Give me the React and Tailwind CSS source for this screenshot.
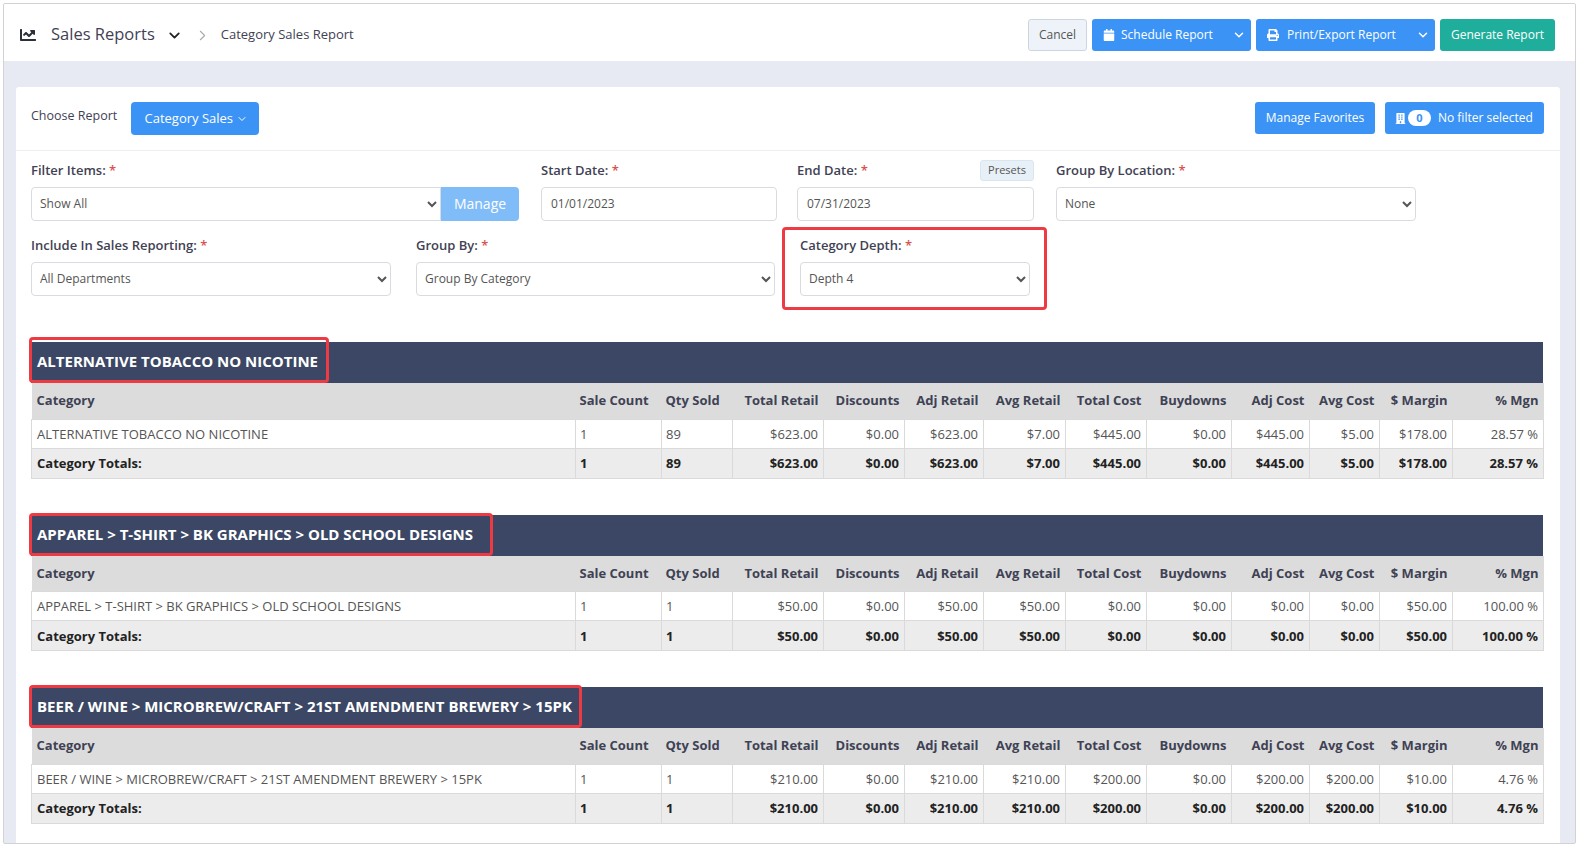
import { ChevronDown, ChevronRight } from 'lucide-react'
import { FaChartLine, FaCalendar, FaPrint, FaBuilding } from 'react-icons/fa'

const columns = [
    { name: 'Category', width: 'w-[544px]', align: 'text-left', pad: 'px-[5px]' },
    { name: 'Sale Count', width: 'w-[86px]', align: 'text-left', pad: 'px-[4px]' },
    { name: 'Qty Sold', width: 'w-[71px]', align: 'text-left', pad: 'px-[4px]' },
    { name: 'Total Retail', width: 'w-[91px]', align: 'text-right', pad: 'px-[5px]' },
    { name: 'Discounts', width: 'w-[81px]', align: 'text-right', pad: 'px-[5px]' },
    { name: 'Adj Retail', width: 'w-[79px]', align: 'text-right', pad: 'px-[5px]' },
    { name: 'Avg Retail', width: 'w-[82px]', align: 'text-right', pad: 'px-[5px]' },
    { name: 'Total Cost', width: 'w-[81px]', align: 'text-right', pad: 'px-[5px]' },
    { name: 'Buydowns', width: 'w-[85px]', align: 'text-right', pad: 'px-[5px]' },
    { name: 'Adj Cost', width: 'w-[78px]', align: 'text-right', pad: 'px-[5px]' },
    { name: 'Avg Cost', width: 'w-[70px]', align: 'text-right', pad: 'px-[5px]' },
    { name: '$ Margin', width: 'w-[73px]', align: 'text-right', pad: 'px-[5px]' },
    { name: '% Mgn', width: 'w-[91px]', align: 'text-right', pad: 'px-[5px]' },
]

const reports = [
    {
        title: 'ALTERNATIVE TOBACCO NO NICOTINE',
        box: '-top-[5px] -right-[11px]',
        values: ['1', '89', '$623.00', '$0.00', '$623.00', '$7.00', '$445.00', '$0.00', '$445.00', '$5.00', '$178.00', '28.57 %'],
    },
    {
        title: 'APPAREL > T-SHIRT > BK GRAPHICS > OLD SCHOOL DESIGNS',
        box: '-top-[2px] -right-[20px]',
        values: ['1', '1', '$50.00', '$0.00', '$50.00', '$50.00', '$0.00', '$0.00', '$0.00', '$0.00', '$50.00', '100.00 %'],
    },
    {
        title: 'BEER / WINE > MICROBREW/CRAFT > 21ST AMENDMENT BREWERY > 15PK',
        box: '-top-[2px] -right-[10px]',
        values: ['1', '1', '$210.00', '$0.00', '$210.00', '$210.00', '$200.00', '$0.00', '$200.00', '$200.00', '$10.00', '4.76 %'],
    },
]

function Label({ text }) {
    return (
        <div className="h-5 text-[13px] leading-5 font-semibold text-[#3f4254]">
            {text} <span className="text-[#d9534f]">*</span>
        </div>
    )
}

function Select({ value }) {
    return (
        <select defaultValue={value} className="mt-[7px] block h-[34px] w-full rounded-[4px] border border-[#d8dbe0] bg-white pb-[2px] pl-[4px] text-[12px] text-[#555]">
            <option>{value}</option>
        </select>
    )
}

function DateInput({ value }) {
    return (
        <input defaultValue={value} className="mt-[7px] block h-[34px] w-full rounded-[4px] border border-[#d8dbe0] bg-white px-[9px] pb-[2px] text-[12px] text-[#555]" />
    )
}

function ReportTable({ report }) {
    return (
        <div className="mb-9 w-[1512px]">
            <div className="flex h-[41px] bg-[#3b4764]">
                <div className="relative ml-[6px] flex items-center pb-[2px] text-[15px] font-bold text-white">
                    {report.title}
                    <div className={`absolute -left-[8px] bottom-0 rounded-[4px] border-[3px] border-[#ee3b43] ${report.box}`}></div>
                </div>
            </div>
            <table className="w-[1512px] table-fixed border-collapse text-[13px]">
                <thead>
                    <tr className="h-9 bg-[#dcdcdc] text-[#3f4254]">
                        {columns.map(col => (
                            <th key={col.name} className={`${col.width} ${col.align} ${col.pad} font-bold whitespace-nowrap`}>{col.name}</th>
                        ))}
                    </tr>
                </thead>
                <tbody>
                    <tr className="h-[29px] bg-white text-[#555]">
                        <td className="border border-[#dadada] px-[5px] pt-[2px] whitespace-nowrap">{report.title}</td>
                        {report.values.map((v, i) => (
                            <td key={i} className={`${columns[i + 1].align} ${columns[i + 1].pad} border border-[#dadada] pt-[2px] whitespace-nowrap`}>{v}</td>
                        ))}
                    </tr>
                    <tr className="h-[30px] bg-[#ececec] font-bold text-[#222]">
                        <td className="border border-[#dadada] px-[5px] pt-[2px]">Category Totals:</td>
                        {report.values.map((v, i) => (
                            <td key={i} className={`${columns[i + 1].align} ${columns[i + 1].pad} border border-[#dadada] pt-[2px] whitespace-nowrap`}>{v}</td>
                        ))}
                    </tr>
                </tbody>
            </table>
        </div>
    )
}

export default function App() {
    return (
        <div className="h-[847px] overflow-hidden bg-white pt-[3px] pr-[4px] pb-[3px] pl-[3px] font-['Open_Sans',sans-serif]">
            <div className="h-[841px] overflow-hidden rounded-[2px] border border-[#d2d2d2] bg-[#e8eaf3]">
                <div className="flex h-[57px] items-center justify-between bg-white pt-[5px] pr-[20px] pl-[16px]">
                    <div className="flex items-center text-[#3f4254]">
                        <FaChartLine className="text-[16px] text-[#2b2f3a]" />
                        <span className="mb-[1px] ml-[15px] text-[16.5px]">Sales Reports</span>
                        <ChevronDown className="ml-[11px] size-[17px] text-[#222]" strokeWidth={2.5} />
                        <ChevronRight className="ml-[11px] size-[17px] text-[#aaa]" strokeWidth={1.5} />
                        <span className="ml-[10px] text-[13px]">Category Sales Report</span>
                    </div>
                    <div className="flex h-8 items-stretch gap-[5px] text-[12px] text-white">
                        <button className="w-[59px] rounded-[3px] border border-[#cdd6e0] bg-[#eef3f9] text-[#555]">Cancel</button>
                        <button className="flex w-[159px] items-center rounded-[3px] bg-[#3b93f5] pr-[5px] pl-[11px]">
                            <FaCalendar className="text-[12px]" />
                            <span className="ml-[6px]">Schedule Report</span>
                            <ChevronDown className="ml-auto size-[14px]" strokeWidth={2.5} />
                        </button>
                        <button className="flex w-[179px] items-center rounded-[3px] bg-[#3b93f5] pr-[5px] pl-[11px]">
                            <FaPrint className="text-[12px]" />
                            <span className="ml-[8px]">Print/Export Report</span>
                            <ChevronDown className="ml-auto size-[14px]" strokeWidth={2.5} />
                        </button>
                        <button className="w-[115px] rounded-[3px] bg-[#1fae9b]">Generate Report</button>
                    </div>
                </div>

                <div className="mt-[26px] mr-[15px] ml-[12px] h-[800px] rounded-t-[3px] bg-white px-[15px]">
                    <div className="-mx-[15px] flex h-[64px] items-start justify-between border-b border-[#eeeeee] px-[15px] pt-[15px]">
                        <div className="flex items-start">
                            <span className="mt-[5px] text-[12.5px] font-medium text-[#3f4254]">Choose Report</span>
                            <button className="ml-[14px] flex h-[33px] w-[128px] items-center justify-center gap-[3px] rounded-[4px] bg-[#3b93f5] pl-[2px] text-[13px] text-white">
                                Category Sales <ChevronDown className="size-[12px]" />
                            </button>
                        </div>
                        <div className="mr-[1px] flex gap-[10px] text-[12px] text-white">
                            <button className="h-8 w-[120px] rounded-[3px] bg-[#3b93f5]">Manage Favorites</button>
                            <button className="flex h-8 w-[159px] items-center rounded-[3px] bg-[#3b93f5] pl-[10px]">
                                <FaBuilding className="text-[11px]" />
                                <span className="ml-[2px] flex h-4 w-[23px] items-center justify-center rounded-full bg-white text-[11px] font-bold text-[#3b93f5]">0</span>
                                <span className="ml-[7px]">No filter selected</span>
                            </button>
                        </div>
                    </div>

                    <div className="flex pt-[9px]">
                        <div className="w-[488px]">
                            <Label text="Filter Items:" />
                            <div className="flex">
                                <select defaultValue="Show All" className="mt-[7px] block h-[34px] flex-1 rounded-l-[4px] border border-[#d8dbe0] bg-white pb-[2px] pl-[4px] text-[12px] text-[#555]">
                                    <option>Show All</option>
                                </select>
                                <button className="mt-[7px] h-[34px] w-[78px] rounded-r-[4px] bg-[#7fbcf8] pb-[2px] text-[14px] text-white">Manage</button>
                            </div>
                        </div>
                        <div className="ml-[22px] w-[236px]">
                            <Label text="Start Date:" />
                            <DateInput value="01/01/2023" />
                        </div>
                        <div className="relative ml-[20px] w-[237px]">
                            <Label text="End Date:" />
                            <button className="absolute top-0 right-0 h-[21px] w-[54px] rounded-[3px] border border-[#dbe5ef] bg-[#e8f0f7] text-[11px] text-[#555]">Presets</button>
                            <DateInput value="07/31/2023" />
                        </div>
                        <div className="ml-[22px] w-[360px]">
                            <Label text="Group By Location:" />
                            <Select value="None" />
                        </div>
                    </div>

                    <div className="mt-[14px] flex">
                        <div className="w-[360px]">
                            <Label text="Include In Sales Reporting:" />
                            <Select value="All Departments" />
                        </div>
                        <div className="ml-[25px] w-[359px]">
                            <Label text="Group By:" />
                            <Select value="Group By Category" />
                        </div>
                        <div className="relative ml-[25px] w-[230px]">
                            <Label text="Category Depth:" />
                            <Select value="Depth 4" />
                            <div className="absolute -top-2 -right-[17px] -bottom-[14px] -left-[18px] rounded-[4px] border-[3px] border-[#ee3b43]"></div>
                        </div>
                    </div>

                    <div className="mt-[46px]">
                        {reports.map(report => (
                            <ReportTable key={report.title} report={report} />
                        ))}
                    </div>
                </div>
            </div>
        </div>
    )
}
